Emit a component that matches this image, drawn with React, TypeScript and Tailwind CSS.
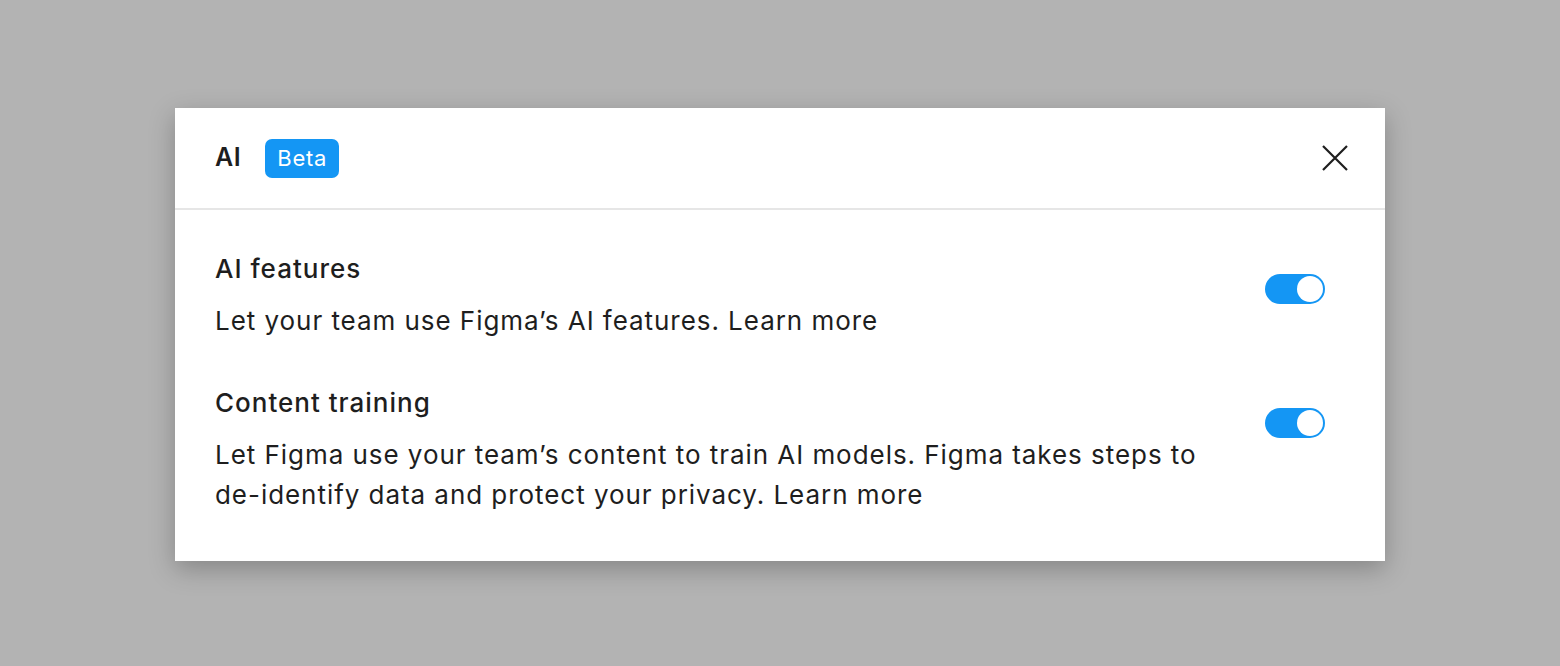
import React from "react";

const Toggle = ({ on = true }: { on?: boolean }) => (
    <div className="mt-[25px] w-[60px] h-[30px] shrink-0 rounded-full bg-[#1496f4] flex items-center justify-end px-[2px]">
        <div className="w-[26px] h-[26px] rounded-full bg-white" />
    </div>
);

const Setting = ({ title, children }: { title: string; children: React.ReactNode }) => (
    <div className="flex items-start justify-between">
        <div className="w-[1000px]">
            <div className="text-[26px] leading-[40px] font-medium tracking-[1px] text-[#1e1e1e]">{title}</div>
            <p className="mt-[12px] text-[26px] leading-[40px] tracking-[0.95px] text-[#1e1e1e]">{children}</p>
        </div>
        <Toggle />
    </div>
);

export default function App() {
    return (
        <div
            className="w-[1560px] h-[666px] bg-[#b3b3b3] flex items-start pt-[108px] pl-[175px]"
            style={{ fontFamily: "Inter, 'Noto Sans', sans-serif" }}
        >
            <div className="w-[1210px] bg-white shadow-[0_8px_24px_rgba(0,0,0,0.25)]">
                <div className="h-[102px] flex items-center justify-between pl-[40px] pr-[37px] border-b-2 border-[#e6e6e6]">
                    <div className="flex items-center gap-[24px]">
                        <span className="text-[25px] font-semibold tracking-[0.6px] text-[#1e1e1e]">AI</span>
                        <span className="h-[39px] px-[12px] rounded-[7px] bg-[#1496f4] text-white text-[22px] tracking-[0.7px] flex items-center">
                            Beta
                        </span>
                    </div>
                    <svg width="26" height="26" viewBox="0 0 26 26" fill="none" stroke="#1e1e1e" strokeWidth="2.2">
                        <path d="M1 1L25 25M25 1L1 25" />
                    </svg>
                </div>
                <div className="pl-[40px] pr-[60px] pt-[39px] pb-[46px] flex flex-col gap-[42px]">
                    <Setting title="AI features">Let your team use Figma’s AI features. Learn more</Setting>
                    <Setting title="Content training">
                        Let Figma use your team’s content to train AI models. Figma takes steps to de-identify data and protect your privacy. Learn more
                    </Setting>
                </div>
            </div>
        </div>
    );
}
